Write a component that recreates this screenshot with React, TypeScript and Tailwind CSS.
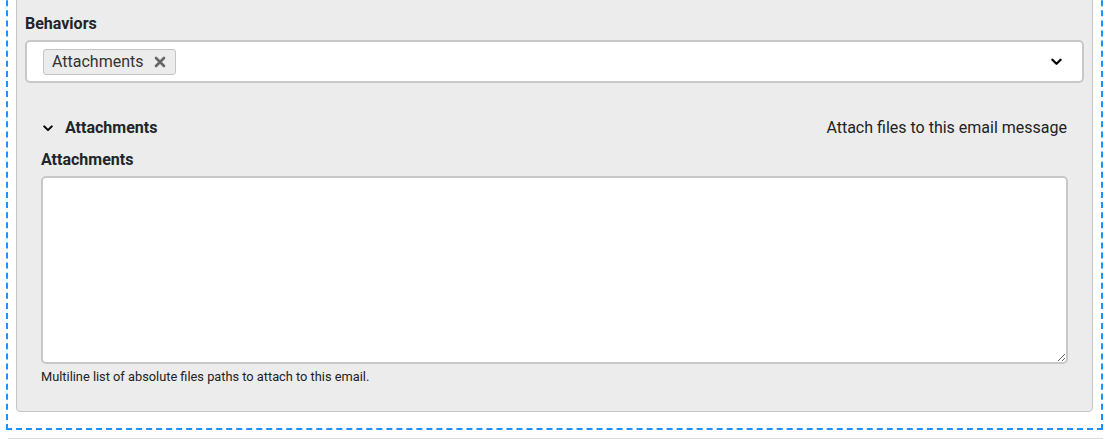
import React from 'react';

function ChevronDown({ className }: { className?: string }) {
  return (
    <svg className={className} viewBox="0 0 12 8" fill="none">
      <path d="M1.5 1.5 L6 6 L10.5 1.5" stroke="currentColor" strokeWidth="2.4" strokeLinecap="round" strokeLinejoin="round" />
    </svg>
  );
}

function CloseX() {
  return (
    <svg className="w-[12px] h-[12px] text-[#666]" viewBox="0 0 12 12" fill="none">
      <path d="M2 2 L10 10 M10 2 L2 10" stroke="currentColor" strokeWidth="2.6" strokeLinecap="round" />
    </svg>
  );
}

export default function App() {
  return (
    <div className="h-[439px] overflow-hidden bg-white font-['Roboto',sans-serif] text-[#212529]">
      <div className="ml-[6px] mr-[8px] mt-[-30px] border-2 border-dashed border-[#1e90ff] px-[8px] pb-[16px]">
        <div className="rounded-b-[4px] border border-[#c6c6c6] bg-[#ececec] px-[8px] pt-[39px] pb-[25px]">
          <div className="text-[16px] font-bold leading-[24px]">Behaviors</div>
          <div className="mt-[4px] flex h-[43px] items-center rounded-[5px] border-2 border-[#c8c8c8] bg-white pl-[16px] pr-[20px]">
            <span className="flex h-[26px] items-center gap-[10px] rounded-[3px] border border-[#c4c4c4] bg-[#ececec] pl-[8px] pr-[9px] text-[16px] text-[#333]">
              Attachments
              <CloseX />
            </span>
            <ChevronDown className="ml-auto w-[11px] h-[8px] text-black" />
          </div>

          <div className="mt-[33px] px-[16px]">
            <div className="flex h-[24px] items-center">
              <ChevronDown className="ml-[2px] w-[10px] h-[7px] text-black" />
              <span className="ml-[12px] text-[16px] font-bold leading-[24px]">Attachments</span>
              <span className="ml-auto mr-[1px] text-[16px] leading-[24px] text-[#222]">Attach files to this email message</span>
            </div>
            <div className="mt-[8px] text-[16px] font-bold leading-[24px]">Attachments</div>
            <textarea className="mt-[4px] block h-[188px] w-full rounded-[5px] border-2 border-[#c8c8c8] bg-white" />
            <div className="mt-[4px] text-[12.8px] leading-[18px] text-[#222]">
              Multiline list of absolute files paths to attach to this email.
            </div>
          </div>
        </div>
      </div>
      <div className="mx-[8px] mt-[8px] border-t border-[#dcdcdc]" />
    </div>
  );
}
